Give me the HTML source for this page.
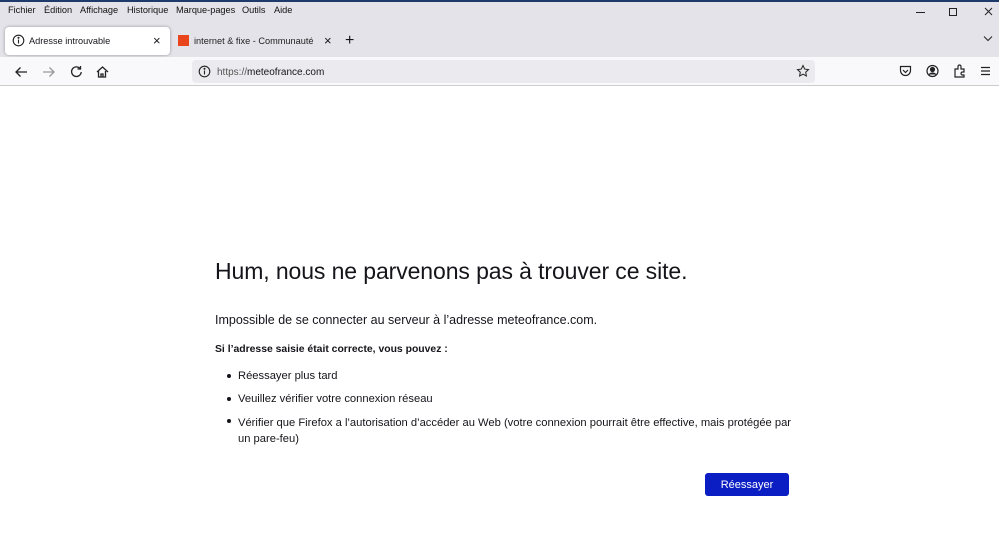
<!DOCTYPE html><html><head><meta charset="utf-8"><style>
*{margin:0;padding:0;box-sizing:border-box}
body{width:999px;height:533px;overflow:hidden;font-family:"Liberation Sans",sans-serif;background:#fff;position:relative;color:#15141a}
.abs{position:absolute}
#top{left:0;top:0;width:999px;height:57px;background:#e3e3e9;border-top:2px solid #1d3a6b}
.menu{top:5px;font-size:9.2px;color:#111}
.tab1{left:5px;top:27px;width:165px;height:28px;background:#fff;border-radius:4px;box-shadow:0 0 3px rgba(0,0,0,.35)}
#nav{left:0;top:57px;width:999px;height:29px;background:#f9f9fb;border-bottom:1px solid #ccc}
.url{left:192px;top:60px;width:623px;height:23px;background:#ebebef;border-radius:4px}
.t{font-size:9.2px}
h1{position:absolute;left:215px;top:258px;font-weight:300;font-size:23px;color:#15141a;white-space:nowrap;letter-spacing:-.1px}
.p{position:absolute;left:215px;white-space:nowrap;color:#15141a}
.btn{left:705px;top:473px;width:84px;height:23px;background:#0a1ec4;border-radius:3px;color:#fff;font-size:11px;text-align:center;line-height:24px}
.dot{position:absolute;left:-11px;top:4px;width:4px;height:4px;border-radius:50%;background:#15141a}
</style></head><body>
<div id="top" class="abs"></div>
<div class="abs menu" style="left:8px">Fichier</div>
<div class="abs menu" style="left:44px">Édition</div>
<div class="abs menu" style="left:80px">Affichage</div>
<div class="abs menu" style="left:127px">Historique</div>
<div class="abs menu" style="left:176px">Marque-pages</div>
<div class="abs menu" style="left:242px">Outils</div>
<div class="abs menu" style="left:274px">Aide</div>
<svg class="abs" style="left:905px;top:5px" width="90" height="14" stroke="#222" fill="none" stroke-width="1"><line x1="11" y1="7.5" x2="20" y2="7.5"/><rect x="44.5" y="3.5" width="7" height="7"/><path d="M80 3l7 7M87 3l-7 7"/></svg>
<div class="abs tab1"></div>
<svg class="abs" style="left:12px;top:34px" width="14" height="14" fill="none" stroke="#222" stroke-width="1.1"><circle cx="6.5" cy="6.5" r="5.3"/><line x1="6.5" y1="5.5" x2="6.5" y2="9.5"/><circle cx="6.5" cy="3.8" r=".5" fill="#222"/></svg>
<div class="abs t" style="left:29px;top:36px">Adresse introuvable</div>
<div class="abs" style="left:153px;top:33px;font-size:13px">×</div>
<div class="abs" style="left:178px;top:35px;width:11px;height:11px;background:#e8451c"></div>
<div class="abs t" style="left:194px;top:36px;color:#222">internet &amp; fixe - Communauté</div>
<div class="abs" style="left:324px;top:33px;font-size:13px">×</div>
<div class="abs" style="left:345px;top:32px;font-size:16px">+</div>
<svg class="abs" style="left:983px;top:35px" width="10" height="8" fill="none" stroke="#222"><path d="M1 1.5l4 4 4-4"/></svg>
<div id="nav" class="abs"></div>
<svg class="abs" style="left:14px;top:64px" width="100" height="16" fill="none" stroke="#222" stroke-width="1.3"><path d="M2 8h11M6.5 3.5L2 8l4.5 4.5"/><path d="M29 8h11M35.5 3.5L40 8l-4.5 4.5" stroke="#999"/><path d="M66 4.5a4.8 4.8 0 1 0 1.2 3.5M66.5 2v3h-3"/><path d="M83 8l5.5-5 5.5 5M84.5 7v6h7V7M87 13v-3h2v3"/></svg>
<div class="abs url"></div>
<svg class="abs" style="left:198px;top:65px" width="14" height="14" fill="none" stroke="#222" stroke-width="1.1"><circle cx="6.5" cy="6.5" r="5.3"/><line x1="6.5" y1="5.5" x2="6.5" y2="9.5"/><circle cx="6.5" cy="3.8" r=".5" fill="#222"/></svg>
<div class="abs" style="left:217px;top:67px;font-size:10px"><span style="color:#555">https://</span>meteofrance.com</div>
<svg class="abs" style="left:796px;top:64px" width="14" height="14" fill="none" stroke="#222"><path d="M7 1.5l1.7 3.6 3.8.5-2.8 2.6.7 3.8L7 10.2 3.6 12l.7-3.8L1.5 5.6l3.8-.5z"/></svg>
<svg class="abs" style="left:899px;top:64px" width="95" height="14" fill="none" stroke="#222" stroke-width="1.2"><path d="M1.5 2.5h10v4a5 5 0 0 1-10 0z"/><path d="M4 6l2.5 2.5L9 6"/><circle cx="33.5" cy="7" r="5.5"/><circle cx="33.5" cy="5.5" r="2" fill="#222"/><path d="M30 10.5q3.5-3 7 0" fill="#222"/><path d="M56 5h3V2.5a1.5 1.5 0 0 1 3 0V5h3v3h-1.5a1.5 1.5 0 0 0 0 3H65v2h-9z"/><path d="M82 3.5h9M82 7h9M82 10.5h9"/></svg>
<h1>Hum, nous ne parvenons pas à trouver ce site.</h1>
<div class="p" style="top:313px;font-size:12.5px">Impossible de se connecter au serveur à l’adresse meteofrance.com.</div>
<div class="p" style="top:344px;font-size:10.4px;font-weight:bold">Si l’adresse saisie était correcte, vous pouvez :</div>
<div class="p" style="left:238px;top:370px;font-size:11.2px"><span class="dot"></span>Réessayer plus tard</div>
<div class="p" style="left:238px;top:393px;font-size:11.2px"><span class="dot"></span>Veuillez vérifier votre connexion réseau</div>
<div class="p" style="left:238px;top:415px;font-size:11.2px;line-height:16px"><span class="dot"></span>Vérifier que Firefox a l’autorisation d’accéder au Web (votre connexion pourrait être effective, mais protégée par<br>un pare-feu)</div>
<div class="abs btn">Réessayer</div>
</body></html>
